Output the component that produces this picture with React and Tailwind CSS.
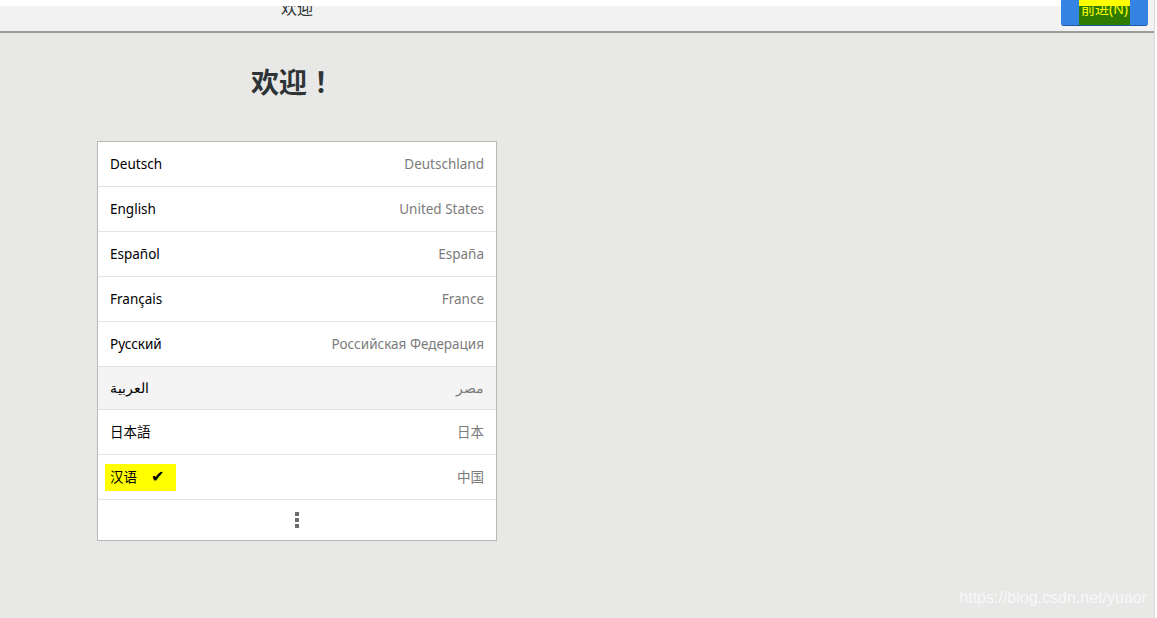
import React from 'react'

const langs = [
  { name: 'Deutsch', region: 'Deutschland' },
  { name: 'English', region: 'United States' },
  { name: 'Español', region: 'España' },
  { name: 'Français', region: 'France' },
  { name: 'Русский', region: 'Российская Федерация' },
  { name: 'العربية', region: 'مصر', hover: true },
  { name: '日本語', region: '日本' },
  { name: '汉语', region: '中国', selected: true },
]

function Row({ lang }) {
  return (
    <div
      className={`flex items-center justify-between px-3 border-b border-[#e3e3e1] ${
        lang.hover ? 'bg-[#f4f4f4] h-[43px]' : 'bg-white h-[45px]'
      }`}
    >
      <div className="relative flex items-center">
        {lang.selected && (
          <div className="absolute left-[-5px] top-[-3px] w-[71px] h-[27px] bg-[#ffff00]" />
        )}
        <span className="relative text-[13.5px] text-black">{lang.name}</span>
        {lang.selected && (
          <span
            className="relative ml-[14px] text-[16px] leading-[16px] text-black"
            style={{ fontFamily: '"DejaVu Sans", sans-serif' }}
          >
            ✔
          </span>
        )}
      </div>
      <span className="text-[13.5px] text-[#7b7b7b]">{lang.region}</span>
    </div>
  )
}

export default function App() {
  return (
    <div
      className="w-[1157px] h-[618px] bg-[#e8e8e7] flex overflow-hidden"
      style={{ fontFamily: '"Noto Sans", "Noto Sans CJK SC", sans-serif' }}
    >
      <div className="w-[1154px] flex flex-col">
        {/* header bar */}
        <div className="relative h-[33px] bg-[#f2f2f2] border-b-2 border-[#9b9b97] flex justify-between shrink-0">
          <div className="absolute left-0 top-0 w-[1061px] h-[6px] bg-white" />
          <div className="w-[594px] flex justify-center">
            <span className="text-[16px] leading-[16px] text-[#2e3436]">欢迎</span>
          </div>
          <div className="mr-[6px] w-[87px] h-[26px] bg-[#3584e4] rounded-b-[3px] border-b border-[#1b5aa6] flex justify-center">
            <div className="relative w-[51px] h-full bg-[#2e7b00] flex justify-center">
              <div className="absolute left-0 top-0 w-full h-[6px] bg-[#ffff00]" />
              <span className="relative text-[14px] leading-[18px] text-[#ffff00]">前进(N)</span>
            </div>
          </div>
        </div>

        {/* content */}
        <div className="flex-1 flex flex-col pl-[97px] pt-[30px] relative">
          <div className="w-[400px] flex justify-center pr-[8px]">
            <h1
              className="text-[28px] leading-[36px] font-bold text-[#2e3436]"
              style={{ fontFamily: '"Noto Sans CJK JP", "Noto Sans CJK SC", sans-serif' }}
            >
              欢迎！
            </h1>
          </div>
          <div className="mt-[42px] w-[400px] bg-white border border-[#b8b8b5] flex flex-col">
            {langs.map((l) => (
              <Row key={l.name} lang={l} />
            ))}
            <div className="h-[40px] flex items-center justify-center">
              <div className="flex flex-col gap-[2px]">
                <div className="w-[4px] h-[4px] bg-[#6b6b6b]" />
                <div className="w-[4px] h-[4px] bg-[#6b6b6b]" />
                <div className="w-[4px] h-[4px] bg-[#6b6b6b]" />
              </div>
            </div>
          </div>
          <div className="flex-1 flex items-end justify-end pr-[7px] pb-[8px]">
            <span
              className="text-[16px] text-white/70"
              style={{ fontFamily: '"Liberation Sans", Arial, sans-serif' }}
            >
              https://blog.csdn.net/yuaor
            </span>
          </div>
        </div>
      </div>
      <div className="w-[1px] bg-[#d8d8d6]" />
      <div className="w-[2px] bg-white" />
    </div>
  )
}
